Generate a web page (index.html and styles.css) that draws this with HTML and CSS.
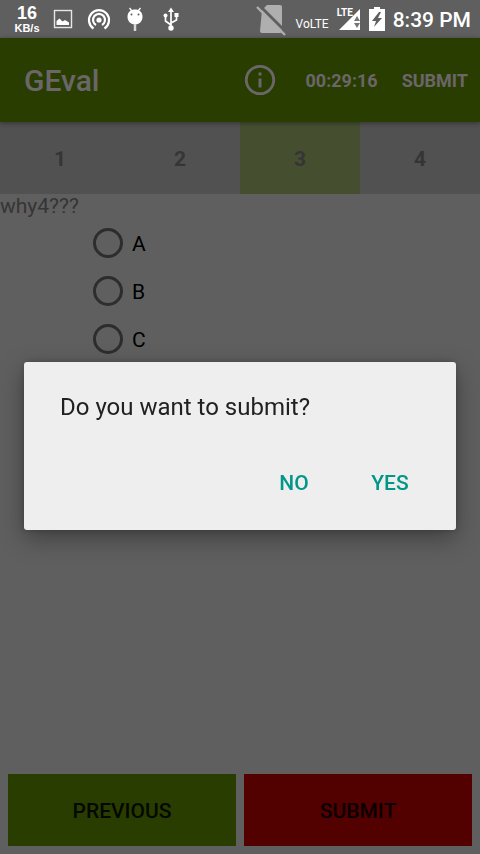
FILE: index.html
```html
<!DOCTYPE html>
<html lang="en">
<head>
<meta charset="utf-8">
<meta name="viewport" content="width=device-width, initial-scale=1">
<title>GEval</title>
<link rel="stylesheet" href="styles.css">
</head>
<body>
<div class="screen">
  <div class="status">
    <div class="speed"><span class="speed-value">16</span><span class="speed-unit">KB/s</span></div>
    <div class="notices">
      <svg width="24" height="24" viewBox="0 0 24 24" fill="none"><rect x="3.500" y="3.500" width="17" height="17" stroke="#e6e6e6" stroke-width="1.400"/><path d="M5.500 18v-4l3-2.500 3 3 2.500-1.500 4 2.500v2.500z" fill="#fff"/></svg>
      <svg width="24" height="24" viewBox="0 0 24 24" fill="none" stroke="#fff" stroke-width="2.200"><circle cx="12" cy="13" r="2.600" fill="#fff" stroke="none"/><path d="M6.500 21.500A10 10 0 1 1 17.500 21.500M9 18A6 6 0 1 1 15 18"/></svg>
      <svg width="24" height="24" viewBox="0 0 24 24"><path d="M6.500 1l2.500 3M17.500 1l-2.500 3" stroke="#fff" stroke-width="1.300"/><path d="M12 2.500c4.500 0 7.500 2.500 7.500 7.500 0 4.500-3.500 7.500-7.500 7.500s-7.500-3-7.500-7.500c0-5 3-7.500 7.500-7.500z" fill="#fff"/><circle cx="8.500" cy="7.500" r="1" fill="#5f5f5f"/><circle cx="15.500" cy="7.500" r="1" fill="#5f5f5f"/><path d="M12 17v7" stroke="#d8d8d8" stroke-width="2.500"/></svg>
      <svg width="24" height="24" viewBox="0 0 24 24" fill="none"><path d="M12 4v17M12 18l-5.500-4V9M12 16l5.500-3V8" stroke="#fff" stroke-width="1.700"/><path d="M12 .5l3 4.500H9zM15.500 6h4v4h-4z" fill="#fff"/><circle cx="6.500" cy="8.500" r="2" fill="#fff"/><circle cx="12" cy="21" r="2.700" fill="#fff"/></svg>
    </div>
    <div class="system">
      <svg width="32" height="34" viewBox="0 0 32 34"><path d="M6 8l5-5h13q2 0 2 2v24q0 2-2 2H6q-2 0-2-2z" fill="#afafaf"/><path d="M3 3l28 28" stroke="#5f5f5f" stroke-width="3"/><path d="M1 5l28 28" stroke="#afafaf" stroke-width="2.400"/></svg>
      <span class="volte">VoLTE</span>
      <div class="signal">
        <svg width="24" height="24" viewBox="0 0 24 24"><path d="M23 2v21H2z" fill="#fff"/><path d="M17 14l3-5 3 5zM17 16h6l-3 5z" fill="#777"/></svg>
        <span class="lte">LTE</span>
      </div>
      <svg width="16" height="24" viewBox="0 0 16 24"><path d="M5 0h6v2h5v22H0V2h5z" fill="#fff"/><path d="M10 5L3 14h4l-2 6 8-9H9l3-6z" fill="#5f5f5f"/></svg>
      <time class="clock">8:39 PM</time>
    </div>
  </div>
  <header class="appbar">
    <h1 class="title">GEval</h1>
    <button class="info" type="button" aria-label="Information"><svg width="36" height="36" viewBox="0 0 36 36"><circle cx="18" cy="18" r="13.700" fill="none" stroke="#6a666a" stroke-width="2.800"/><path d="M16.500 10.500h3v3h-3zM16.500 16.500h3v9h-3z" fill="#6a666a"/></svg></button>
    <span class="timer">00:29:16</span>
    <button class="action" type="button">SUBMIT</button>
  </header>
  <nav class="tabs">
    <button class="tab" type="button">1</button>
    <button class="tab" type="button">2</button>
    <button class="tab active" type="button">3</button>
    <button class="tab" type="button">4</button>
  </nav>
  <main class="question">
    <p class="prompt" id="prompt">why4???</p>
    <div class="options" role="radiogroup" aria-labelledby="prompt">
      <label class="option"><input type="radio" name="answer"><span>A</span></label>
      <label class="option"><input type="radio" name="answer"><span>B</span></label>
      <label class="option"><input type="radio" name="answer"><span>C</span></label>
    </div>
  </main>
  <footer class="footer">
    <button class="previous" type="button">PREVIOUS</button>
    <button class="submit" type="button">SUBMIT</button>
  </footer>
</div>
<div class="overlay">
  <div class="dialog" role="dialog" aria-modal="true" aria-labelledby="message">
    <p class="message" id="message">Do you want to submit?</p>
    <div class="choices">
      <button class="choice" type="button">NO</button>
      <button class="choice" type="button">YES</button>
    </div>
  </div>
</div>
</body>
</html>
```
FILE: styles.css
```css
* {
  box-sizing: border-box;
}

body {
  margin: 0;
  background: #5f5f5f;
  font-family: Roboto, "Noto Sans", sans-serif;
}

button {
  margin: 0;
  padding: 0;
  border: 0;
  background: none;
  font-family: inherit;
  font-weight: 500;
}

svg {
  display: block;
  flex: none;
}

p,
h1 {
  margin: 0;
}

.screen {
  display: flex;
  flex-direction: column;
  min-height: 100vh;
}

.status {
  display: flex;
  align-items: center;
  height: 38px;
  padding: 0 9px 0 12px;
  color: #fff;
}

.speed {
  display: flex;
  flex-direction: column;
  align-items: center;
  width: 30px;
  font-family: "Liberation Sans", sans-serif;
  font-weight: 700;
}

.speed-value {
  font-size: 18px;
  line-height: 18px;
}

.speed-unit {
  font-size: 11px;
  line-height: 12px;
}

.notices {
  display: flex;
  gap: 12px;
  margin-left: 9px;
}

.system {
  display: flex;
  align-items: center;
  gap: 8px;
  margin-left: auto;
}

.volte {
  padding-top: 10px;
  font-size: 12px;
  line-height: 14px;
}

.signal {
  position: relative;
}

.lte {
  position: absolute;
  top: 0;
  left: 0;
  font-family: "Liberation Sans Narrow", Roboto, sans-serif;
  font-size: 10px;
  font-weight: 700;
  line-height: 12px;
}

.clock {
  padding-top: 2px;
  font-size: 21px;
  font-weight: 500;
  line-height: 26px;
}

.appbar {
  position: relative;
  display: flex;
  align-items: center;
  height: 84px;
  padding: 0 12px 0 24px;
  background: #2a3d00;
  box-shadow: 0 1px 5px rgba(0, 0, 0, 0.4);
  color: #6a666a;
}

.title {
  margin-right: auto;
  font-size: 30px;
  font-weight: 500;
}

.timer {
  margin: 0 24px 0 28px;
  font-size: 18px;
  font-weight: 700;
}

.action {
  color: inherit;
  font-size: 18px;
  font-weight: 700;
}

.tabs {
  display: grid;
  grid-template-columns: repeat(4, 1fr);
  height: 72px;
  background: #515151;
}

.tab {
  padding-top: 2px;
  color: #353535;
  font-size: 21px;
  font-weight: 700;
}

.active {
  background: #454f30;
}

.question {
  flex: 1;
}

.prompt {
  color: #353535;
  font-size: 21px;
  line-height: 25px;
}

.options {
  margin-left: 93px;
}

.option {
  display: flex;
  align-items: center;
  gap: 9px;
  height: 48px;
  color: #000;
  font-size: 21px;
  line-height: 26px;
}

.option span {
  padding-top: 2px;
}

.option input {
  width: 30px;
  height: 30px;
  margin: 0;
  border: 3px solid #2d2d2d;
  border-radius: 50%;
  appearance: none;
}

.footer {
  display: grid;
  grid-template-columns: 1fr 1fr;
  gap: 8px;
  padding: 8px;
}

.previous,
.submit {
  height: 72px;
  padding-top: 2px;
  font-size: 21px;
}

.previous {
  background: #2a3d00;
  color: #050800;
}

.submit {
  background: #520000;
  color: #0b0000;
}

.overlay {
  position: fixed;
  inset: 38px 0 0;
  display: grid;
  align-items: center;
  padding: 0 24px;
}

.dialog {
  padding: 30px 18px 18px 36px;
  border-radius: 3px;
  background: #eee;
  box-shadow: 0 8px 24px rgba(0, 0, 0, 0.35), 0 0 6px rgba(0, 0, 0, 0.2);
}

.message {
  color: #212121;
  font-size: 24px;
  line-height: 30px;
}

.choices {
  display: flex;
  justify-content: flex-end;
  margin-top: 32px;
}

.choice {
  min-width: 96px;
  height: 58px;
  padding: 0 12px;
  color: #009688;
  font-size: 21px;
}
```
